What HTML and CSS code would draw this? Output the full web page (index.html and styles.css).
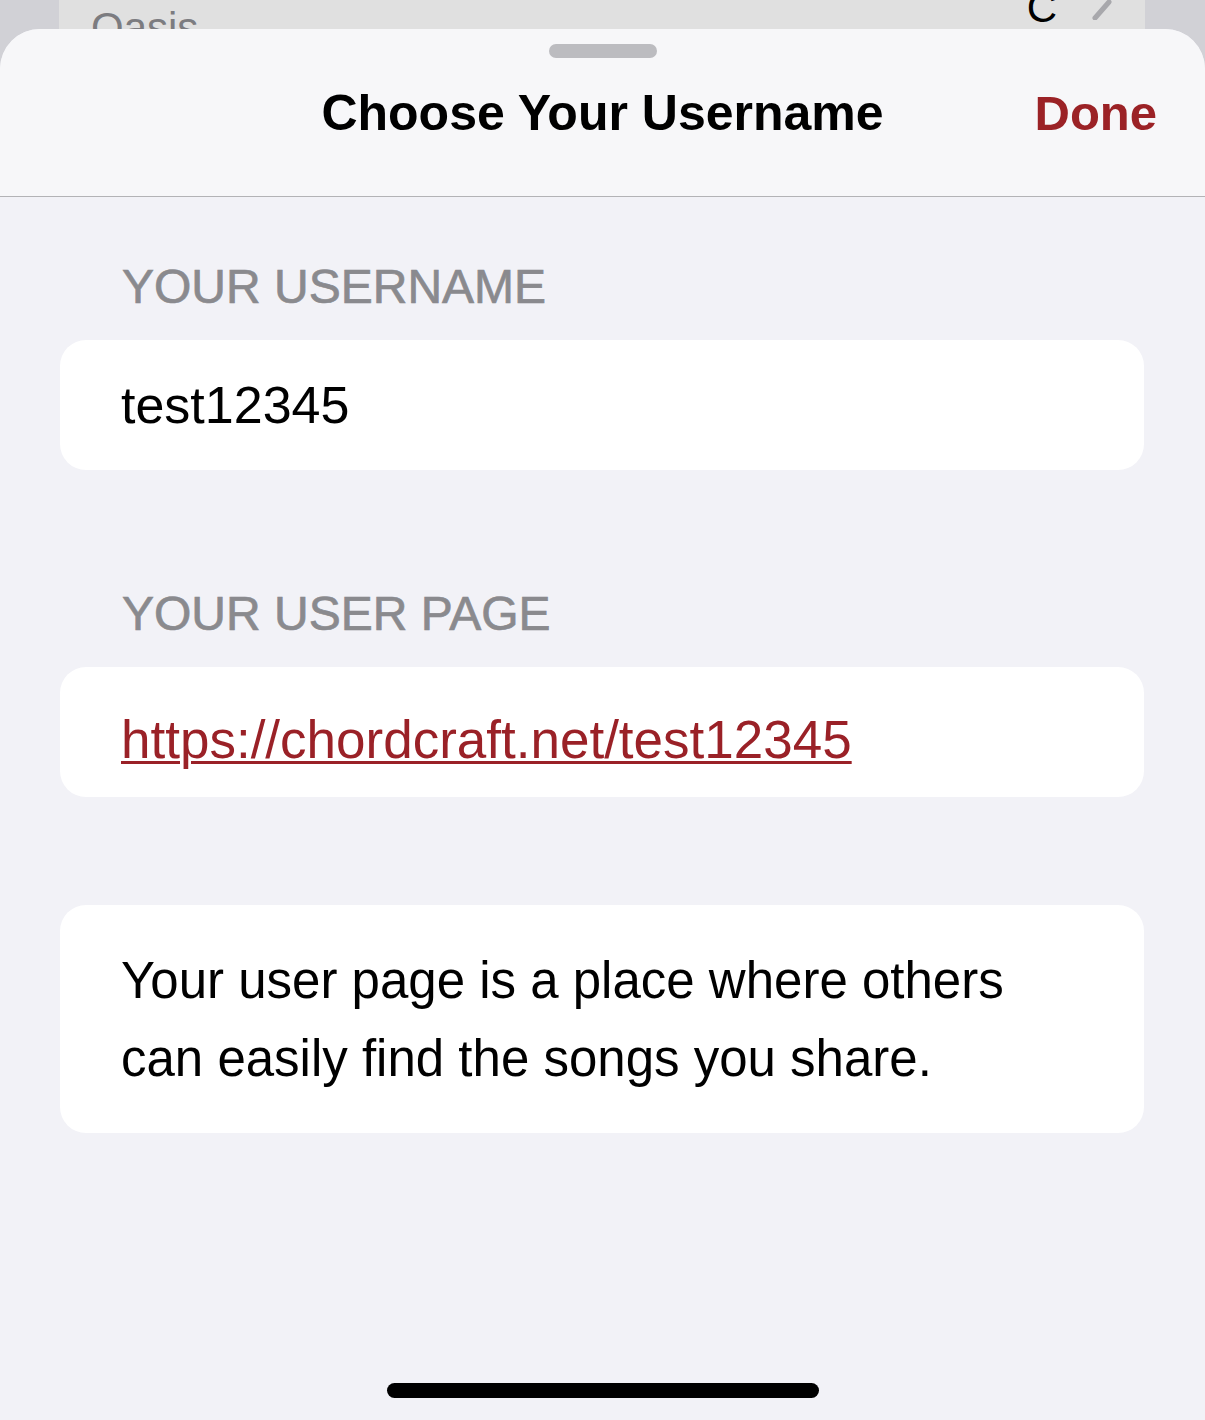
FILE: index.html
```html
<!DOCTYPE html>
<html lang="en">

<head>
    <meta charset="UTF-8">
    <meta name="viewport" content="width=device-width, initial-scale=1.0">
    <title>Choose Your Username</title>
    <link rel="stylesheet" href="styles.css">
</head>

<body>
    <!-- the list that sits behind the sheet -->
    <div class="backdrop">
        <div class="back-card">
            <span class="back-title">Oasis</span>
            <span class="back-key">C</span>
            <svg class="back-chevron" width="22" height="30" viewBox="0 0 22 30">
                <path d="M4 28 L18 12" stroke="#a8a8ac" stroke-width="5" stroke-linecap="round" fill="none" />
            </svg>
        </div>
    </div>

    <div class="sheet">
        <div class="sheet-header">
            <div class="grabber"></div>
            <div class="nav">
                <h1 class="nav-title">Choose Your Username</h1>
                <a class="nav-done" href="#">Done</a>
            </div>
        </div>

        <div class="sheet-body">
            <div class="section">
                <div class="section-label">YOUR USERNAME</div>
                <div class="card">
                    <input class="name-input" type="text" value="test12345">
                </div>
            </div>

            <div class="section">
                <div class="section-label">YOUR USER PAGE</div>
                <div class="card card-link">
                    <a class="page-link" href="#">https://chordcraft.net/test12345</a>
                </div>
            </div>

            <div class="section section-note">
                <div class="card card-note">
                    <p>Your user page is a place where others can easily find the songs you share.</p>
                </div>
            </div>
        </div>

        <div class="home-bar"></div>
    </div>
</body>

</html>
```

FILE: styles.css
```css
body {
    margin: 0;
    background-color: #d1d1d6;
    font-family: "Liberation Sans", Arial, sans-serif;
    color: #000;
}

.backdrop {
    height: 80px;
    padding: 0 60px 0 59px;
}

.back-card {
    height: 100%;
    background-color: #e0e0e0;
    display: flex;
    align-items: flex-start;
}

.back-title {
    margin: 4px 0 0 32px;
    font-size: 42px;
    color: #7c7c80;
}

.back-key {
    margin: -16px 0 0 auto;
    font-size: 42px;
}

.back-chevron {
    margin: -10px 32px 0 34px;
}

/* the sheet itself slides over the backdrop */
.sheet {
    position: relative;
    margin-top: -51px;
    background-color: #f2f2f7;
    border-radius: 40px 40px 0 0;
    min-height: 1391px;
    display: flex;
    flex-direction: column;
}

.sheet-header {
    background-color: #f7f7f9;
    border-radius: 40px 40px 0 0;
    border-bottom: 1px solid #b3b3b6;
    height: 168px;
    box-sizing: border-box;
    padding-top: 15px;
}

.grabber {
    width: 108px;
    height: 14px;
    border-radius: 7px;
    background-color: #bcbcc0;
    margin: 0 auto;
}

.nav {
    position: relative;
    height: 110px;
    display: flex;
    align-items: center;
    justify-content: center;
}

.nav-title {
    margin: 0;
    font-size: 50px;
    font-weight: bold;
}

.nav-done {
    position: absolute;
    right: 48px;
    top: 50%;
    transform: translateY(-50%);
    font-size: 49px;
    font-weight: bold;
    color: #9b2226;
    text-decoration: none;
}

.sheet-body {
    padding: 62px 61px 0 60px;
    flex: 1;
}

.section {
    margin-bottom: 116px;
}

.section-note {
    margin-top: -8px;
}

.section-label {
    padding-left: 62px;
    font-size: 48px;
    color: #8a8a8e;
    -webkit-text-stroke: 0.7px #8a8a8e;
    line-height: 56px;
    margin-bottom: 25px;
}

.card {
    background-color: #fff;
    border-radius: 26px;
    height: 130px;
    box-sizing: border-box;
    padding: 0 61px;
    display: flex;
    align-items: center;
}

.name-input {
    border: none;
    outline: none;
    background: transparent;
    padding: 0;
    width: 100%;
    font-family: inherit;
    font-size: 52px;
    color: #000;
}

.card-link {
    padding-top: 14px;
}

.page-link {
    font-size: 53px;
    color: #9a2127;
    text-decoration: underline;
    text-decoration-thickness: 3px;
    text-underline-offset: 3px;
}

.card-note {
    height: auto;
    padding: 37px 61px 35px;
}

.card-note p {
    margin: 0;
    max-width: 900px;
    font-size: 51px;
    line-height: 78px;
}

.home-bar {
    width: 432px;
    height: 15px;
    border-radius: 8px;
    background-color: #000;
    margin: 0 auto 22px;
}
```
